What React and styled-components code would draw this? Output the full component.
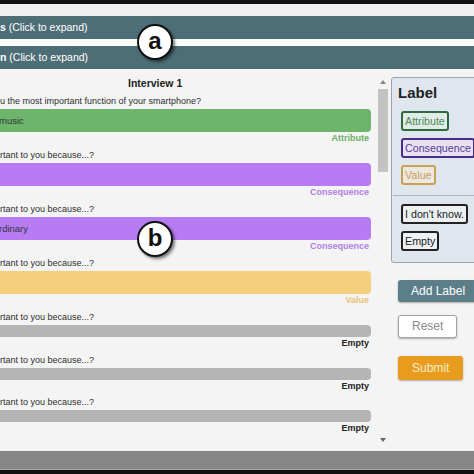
import React from "react";
import styled, { createGlobalStyle } from "styled-components";

const Global = createGlobalStyle`
  html, body { margin: 0; padding: 0; background: #f4f4f4; }
  body { font-family: "Liberation Sans", Arial, sans-serif; }
  * { box-sizing: border-box; }
`;

const Page = styled.div`
  position: relative;
  width: 474px;
  height: 474px;
  overflow: hidden;
  background: #f4f4f4;
  display: flex;
  flex-direction: column;
`;

const BlackStrip = styled.div`
  height: ${(p) => p.$h}px;
  background: #111;
  flex: none;
`;

const Spacer = styled.div`
  height: ${(p) => p.$h}px;
  background: ${(p) => p.$bg};
  flex: none;
`;

const AccordionBar = styled.div`
  height: 23px;
  flex: none;
  background: #4e6e77;
  color: #fff;
  font-size: 10.5px;
  line-height: 23px;
  white-space: nowrap;
  b { font-weight: 700; }
`;

const Main = styled.div`
  height: 382px;
  flex: none;
  display: flex;
`;

const Pane = styled.div`
  width: 389px;
  flex: none;
  display: flex;
`;

const Column = styled.div`
  width: 371px;
  flex: none;
  padding-top: 7px;
  display: flex;
  flex-direction: column;
`;

const Title = styled.div`
  font-size: 10.5px;
  font-weight: 700;
  line-height: 14px;
  color: #222;
  padding-left: 128px;
  margin-bottom: 5px;
`;

const Row = styled.div`
  display: flex;
  flex-direction: column;
  margin-bottom: ${(p) => (p.$empty ? 4.6 : 5)}px;
`;

const Question = styled.div`
  font-size: 9px;
  line-height: 12px;
  color: #2e2e2e;
  white-space: nowrap;
`;

const Bar = styled.div`
  margin-top: 2px;
  height: ${(p) => (p.$empty ? 12 : 23)}px;
  background: ${(p) => p.$color};
  border-radius: 0 4px 4px 0;
  font-size: 9.5px;
  line-height: ${(p) => (p.$empty ? 12 : 23)}px;
  color: #333;
  text-indent: -1px;
  white-space: nowrap;
`;

const Tag = styled.div`
  font-size: 9px;
  font-weight: 700;
  line-height: 12px;
  text-align: right;
  padding-right: 2px;
  color: ${(p) => p.$color};
`;

const Scrollbar = styled.div`
  width: 12px;
  margin-left: 6px;
  flex: none;
  display: flex;
  flex-direction: column;
  align-items: center;
  padding-top: 11px;
  padding-bottom: 9px;
`;

const Arrow = styled.div`
  width: 0;
  height: 0;
  border-left: 3px solid transparent;
  border-right: 3px solid transparent;
  ${(p) =>
    p.$down
      ? "border-top: 4px solid #666; margin-top: auto;"
      : "border-bottom: 4px solid #888;"}
`;

const Thumb = styled.div`
  width: 10px;
  height: 83px;
  margin-top: 5px;
  background: #c3c3c3;
`;

const Sidebar = styled.div`
  flex: 1;
  display: flex;
  flex-direction: column;
  align-items: flex-start;
  padding-top: 8px;
`;

const LabelPanel = styled.div`
  margin-left: 2px;
  width: 110px;
  flex: none;
  background: #dfe6ee;
  border: 1px solid #9ba4ac;
  border-radius: 3px;
  padding: 6px 6px 11px 6px;
  display: flex;
  flex-direction: column;
  align-items: flex-start;
  margin-bottom: 17px;
`;

const PanelTitle = styled.div`
  font-size: 15px;
  font-weight: 700;
  line-height: 18px;
  color: #222;
  margin-bottom: 9px;
`;

const Chip = styled.div`
  margin-left: 3px;
  height: 20px;
  padding: 0 2px;
  border: 2px solid ${(p) => p.$border};
  border-radius: 3px;
  background: ${(p) => p.$bg};
  color: ${(p) => p.$color};
  font-size: 10.7px;
  line-height: 16px;
  white-space: nowrap;
  margin-bottom: ${(p) => p.$mb ?? 7}px;
`;

const Divider = styled.div`
  align-self: stretch;
  margin: 10px -6px 8px -5px;
  height: 1px;
  background: #aeb4ba;
`;

const Button = styled.div`
  margin-left: 9px;
  height: ${(p) => p.$h}px;
  line-height: ${(p) => p.$h - (p.$outline ? 2 : 0)}px;
  padding: 0 ${(p) => p.$pr ?? p.$px}px 0 ${(p) => p.$px}px;
  font-size: 12px;
  border-radius: 3px;
  white-space: nowrap;
  background: ${(p) => p.$bg};
  color: ${(p) => p.$color};
  border: ${(p) => (p.$outline ? "1px solid #a3a3a3" : "none")};
  box-shadow: 0 1px 2px rgba(0, 0, 0, 0.3);
  margin-bottom: ${(p) => p.$mb}px;
`;

const Footer = styled.div`
  height: 19px;
  flex: none;
  background: #878787;
  border-bottom: 1px solid #a5a5a5;
`;

const Marker = styled.div`
  position: absolute;
  left: ${(p) => p.$x}px;
  top: ${(p) => p.$y}px;
  width: 36px;
  height: 36px;
  border-radius: 50%;
  background: #fff;
  border: 2px solid #111;
  box-shadow: 2px 2px 3px rgba(0, 0, 0, 0.5);
  display: flex;
  align-items: center;
  justify-content: center;
  font-family: "Liberation Sans", Arial, sans-serif;
  font-size: 24px;
  font-weight: 700;
  color: #111;
  line-height: 1;
  padding-bottom: 3px;
`;

const rows = [
  { q: "u the most important function of your smartphone?", text: "music", color: "#6cb56a", tag: "Attribute", tagColor: "#6aaf68" },
  { q: "rtant to you because...?", text: "", color: "#b77cf4", tag: "Consequence", tagColor: "#b07ee6" },
  { q: "rtant to you because...?", text: "rdinary", color: "#b77cf4", tag: "Consequence", tagColor: "#b07ee6" },
  { q: "rtant to you because...?", text: "", color: "#f6cf7e", tag: "Value", tagColor: "#e9bf78" },
  { q: "rtant to you because...?", text: "", color: "#b5b5b5", tag: "Empty", tagColor: "#222", empty: true },
  { q: "rtant to you because...?", text: "", color: "#b5b5b5", tag: "Empty", tagColor: "#222", empty: true },
  { q: "rtant to you because...?", text: "", color: "#b5b5b5", tag: "Empty", tagColor: "#222", empty: true },
];

export default function App() {
  return (
    <>
      <Global />
      <Page>
        <BlackStrip $h={4} />
        <Spacer $h={12} $bg="#efefef" />
        <AccordionBar>
          <b>s</b> (Click to expand)
        </AccordionBar>
        <Spacer $h={7} $bg="#fbfbfb" />
        <AccordionBar>
          <b>n</b> (Click to expand)
        </AccordionBar>
        <Main>
          <Pane>
            <Column>
              <Title>Interview 1</Title>
              {rows.map((r, i) => (
                <Row key={i} $empty={r.empty}>
                  <Question>{r.q}</Question>
                  <Bar $color={r.color} $empty={r.empty}>
                    {r.text}
                  </Bar>
                  <Tag $color={r.tagColor}>{r.tag}</Tag>
                </Row>
              ))}
            </Column>
            <Scrollbar>
              <Arrow />
              <Thumb />
              <Arrow $down />
            </Scrollbar>
          </Pane>
          <Sidebar>
            <LabelPanel>
              <PanelTitle>Label</PanelTitle>
              <Chip $border="#2f6a3e" $bg="#e2ece6" $color="#4f8a5e">Attribute</Chip>
              <Chip $border="#4b2b8c" $bg="#e8e2f3" $color="#5a3b9c">Consequence</Chip>
              <Chip $border="#c9a154" $bg="#ece8df" $color="#c8a062" $mb={0}>Value</Chip>
              <Divider />
              <Chip $border="#222" $bg="#eef1f4" $color="#222">I don't know.</Chip>
              <Chip $border="#222" $bg="#eef1f4" $color="#222" $mb={0}>Empty</Chip>
            </LabelPanel>
            <Button $h={22} $px={13} $pr={24} $bg="#5b7e89" $color="#fff" $mb={13}>Add Label</Button>
            <Button $h={23} $px={13} $bg="#fff" $color="#8a8a8a" $outline $mb={18}>Reset</Button>
            <Button $h={24} $px={14} $bg="#e89c1e" $color="#fdebc8" $mb={0}>Submit</Button>
          </Sidebar>
        </Main>
        <Footer />
        <BlackStrip $h={4} />
        <Marker $x={137} $y={24}>a</Marker>
        <Marker $x={137} $y={221}>b</Marker>
      </Page>
    </>
  );
}
